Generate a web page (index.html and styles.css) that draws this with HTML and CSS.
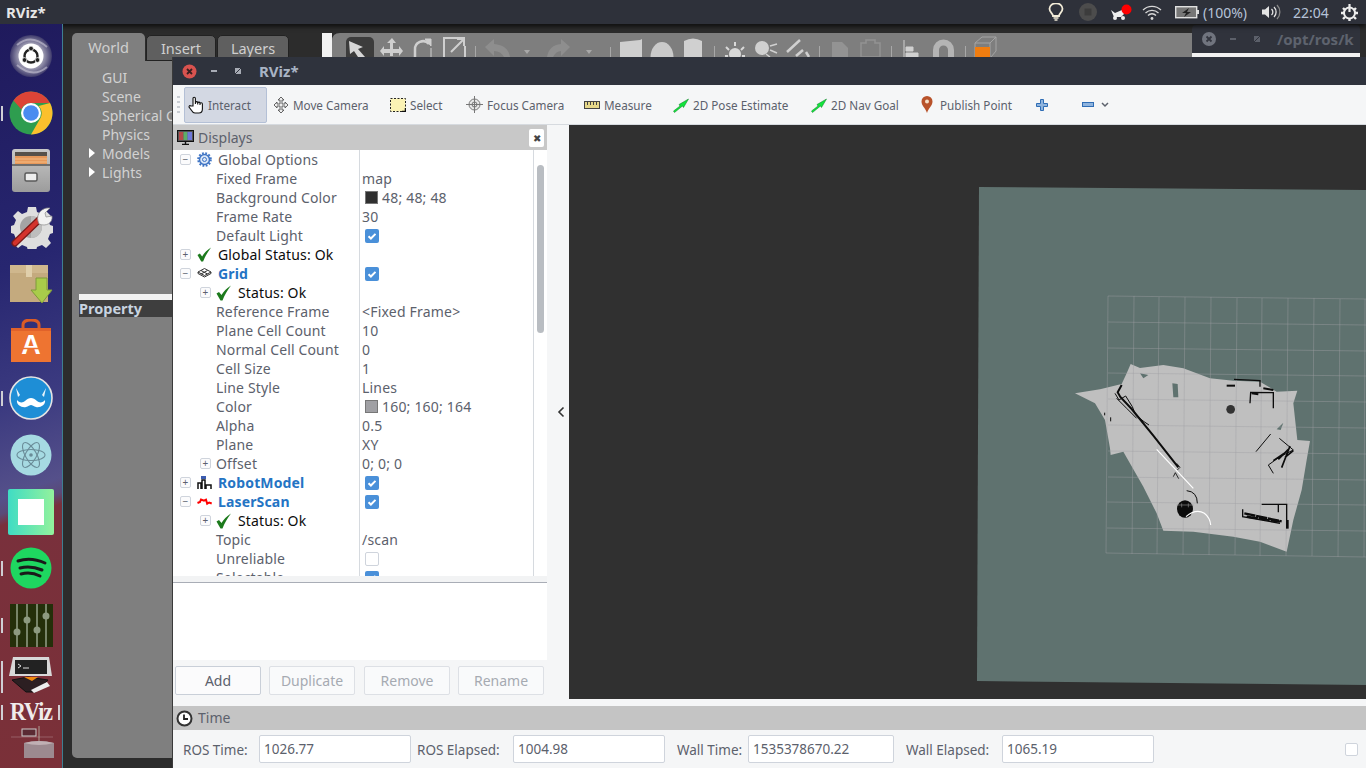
FILE: index.html
```html
<!DOCTYPE html>
<html lang="en">
<head>
<meta charset="utf-8">
<title>RViz*</title>
<link rel="stylesheet" href="styles.css">
</head>
<body>
<svg class="defs" width="0" height="0">
  <defs>
    <symbol id="tick" viewBox="0 0 14 14"><path d="M3.500 7.200l2.400 2.300 4.600-4.600" fill="none" stroke="#fff" stroke-width="2"/></symbol>
    <symbol id="ok" viewBox="0 0 16 16"><path d="M.5 8.500l2.500-1.500 2.500 3C7.500 6.500 10.500 3.500 15 .5 11.500 5 8.500 10 6.500 15.500L4.500 15.500z" fill="#1c7a1c"/></symbol>
    <symbol id="arrow" viewBox="0 0 16 16"><path d="M.5 14l6.500-5-1-1.500L15.500 2 10.500 10.500 9.500 9 1.500 15.500z" fill="#12e53c" stroke="#0a7a22" stroke-width=".5"/></symbol>
  </defs>
</svg>

<div class="gazebo">
  <div class="gz-left">
    <div class="gz-tabs">
      <span class="gz-tab active">World</span>
      <span class="gz-tab">Insert</span>
      <span class="gz-tab gz-layers">Layers</span>
    </div>
    <div class="gz-panel">
      <div class="gz-item">GUI</div>
      <div class="gz-item">Scene</div>
      <div class="gz-item">Spherical Coordinates</div>
      <div class="gz-item">Physics</div>
      <div class="gz-item tri">Models</div>
      <div class="gz-item tri">Lights</div>
      <div class="gz-white"></div>
      <div class="gz-prop">Property</div>
    </div>
  </div>
  <div class="gz-strip"></div>
  <svg class="gz-tools" width="860" height="24" viewBox="332 33 860 24">
    <path d="M332 57V41q0-8 8-8h852v24z" fill="#7e7e7e"/>
    <rect x="346" y="37" width="28" height="26" rx="5" fill="#3c3c3c"/>
    <path d="M349 41l14 6-5 2 7 8h-7l-4-6-4 3z" fill="#d6d6d6"/>
    <path d="M392 38l4 5h-3v6h6v-3l4 5-4 5v-3h-6v3h-3v-3h-6v3l-4-5 4-5v3h6v-6h-3z" fill="#cfcfcf"/>
    <path d="M415 57v-7a8 8 0 0 1 14-6" fill="none" stroke="#cfcfcf" stroke-width="2.500"/>
    <path d="M425 39h6v7z M431 48v9" fill="#cfcfcf" stroke="#cfcfcf"/>
    <path d="M444 57V38h21M465 57V46M451 52l12-12M457 39h7v7" fill="none" stroke="#cfcfcf" stroke-width="2"/>
    <path d="M475.500 46v11M610.500 47v10M714.500 46v11M819.500 46v11M891.500 46v11M965.500 46v11" stroke="#a8a8a8"/>
    <path d="M485 47l9-8v5q14 1 16 13h-6q-3-6-10-6v5z" fill="#8e8e8e"/>
    <path d="M570 47l-9-8v5q-12 1-14 13h6q3-6 8-6v5z" fill="#8e8e8e"/>
    <path d="M524 50h6l-3 4zM586 50h6l-3 4z" fill="#a8a8a8"/>
    <path d="M620 57V42l20-2 2-1v18z" fill="#cfcfcf"/>
    <ellipse cx="662" cy="57" rx="11.500" ry="15" fill="#cacaca"/>
    <path d="M684 57V41q9-5 18 0v16z" fill="#d0d0d0"/>
    <circle cx="735" cy="54" r="6" fill="#d8d8d8"/><path d="M735 42v4M726 47l3 3M744 47l-3 3M725 56h3M742 56h3" stroke="#d8d8d8" stroke-width="2"/>
    <circle cx="762" cy="48" r="7" fill="#d0d0d0"/><path d="M770 46l7-2M770 50l7 3M766 54l4 3" stroke="#d0d0d0" stroke-width="1.500"/>
    <path d="M787 52l13-12M796 56l7-6M806 52l3 5" stroke="#d0d0d0" stroke-width="2.500"/>
    <path d="M832 57V42h10l6 6v9z" fill="#939393"/>
    <path d="M861 57V43h5v-3h9v3h5v14z" fill="none" stroke="#939393" stroke-width="1.500"/>
    <path d="M904 40v17M906 47h7v4h-7zM906 53h12v4h-12z" fill="#d0d0d0" stroke="#d0d0d0"/>
    <path d="M933 57v-7a10.500 10.500 0 0 1 21 0v7h-6v-7a4.500 4.500 0 0 0-9 0v7z" fill="#b4b4b4"/>
    <path d="M975 57V43l7-6h14v14l-5 6M975 43h15v14M990 43l6-6" fill="none" stroke="#a4a4a4"/>
    <rect x="975" y="47" width="15" height="10" fill="#f07d10"/>
  </svg>
</div>

<div class="term">
  <div class="term-head">
    <svg class="ctl" width="14" height="14" viewBox="0 0 14 14"><circle cx="7" cy="7" r="7" fill="#70747e"/><path d="M4.500 4.500l5 5m0-5l-5 5" stroke="#33363f" stroke-width="1.800"/></svg>
    <span class="dash dim"></span>
    <span class="shrink dim"></span>
    <span class="term-title">/opt/ros/k</span>
  </div>
  <div class="term-body"></div>
</div>

<header class="topbar">
  <span class="app-title">RViz*</span>
  <div class="tray">
    <svg class="t-bulb" width="16" height="18" viewBox="0 0 16 18"><path d="M5 13c0-3-3.500-3.500-3.500-7.200a6.500 5.500 0 0 1 13 0C14.500 9.500 11 10 11 13z" fill="none" stroke="#f2ecd8" stroke-width="1.800"/><path d="M5.500 15h5M6.500 17h3" stroke="#f2ecd8" stroke-width="1.500"/></svg>
    <svg class="t-rec" width="18" height="18" viewBox="0 0 18 18"><circle cx="9" cy="9" r="9" fill="#4c4c4c"/><rect x="5.500" y="5.500" width="7" height="7" fill="#3c3c3c"/></svg>
    <svg class="t-robot" width="22" height="18" viewBox="0 0 22 18"><path d="M1 7l4 3 7-3 2 4-3 3H4z" fill="#eee"/><circle cx="5" cy="15" r="2" fill="#eee"/><circle cx="13" cy="15" r="2" fill="#eee"/><circle cx="16.500" cy="6.500" r="5" fill="#f00"/></svg>
    <svg class="t-wifi" width="20" height="16" viewBox="0 0 20 16"><path d="M1 6a13 13 0 0 1 18 0M3.500 9a9.500 9.500 0 0 1 13 0M6 11.500a5.500 5.500 0 0 1 8 0" fill="none" stroke="#d8d8d8" stroke-width="1.300"/><circle cx="10" cy="14.500" r="1.400" fill="#d8d8d8"/></svg>
    <svg class="t-batt" width="24" height="14" viewBox="0 0 24 14"><rect x=".7" y="1.700" width="21" height="11" fill="#777" stroke="#e0e0e0" stroke-width="1.400"/><rect x="22" y="5" width="2" height="4" fill="#ddd"/><path d="M14 3L7 8h4l-2 4 7-5h-4z" fill="#222"/></svg>
    <span class="t-pct">(100%)</span>
    <svg class="t-vol" width="20" height="16" viewBox="0 0 20 16"><path d="M1 5.500h3l4-3.500v12l-4-3.500H1z" fill="#e4e4e4"/><path d="M10.500 5a4 4 0 0 1 0 6M13 3a7 7 0 0 1 0 10" fill="none" stroke="#e4e4e4" stroke-width="1.300"/><path d="M16 1a10 10 0 0 1 0 14" fill="none" stroke="#888" stroke-width="1.300"/></svg>
    <span class="t-clock">22:04</span>
    <svg class="t-gear" width="17" height="17" viewBox="0 0 17 17"><circle cx="8.500" cy="9" r="5.500" fill="none" stroke="#ededed" stroke-width="2"/><path d="M8.500 0v8" stroke="#ededed" stroke-width="2.200"/><path d="M2 4l2 2M15 4l-2 2M0 9h3M14 9h3M2 15l2-2M15 15l-2-2M8.500 14.500V17" stroke="#ededed" stroke-width="2.400"/></svg>
  </div>
</header>

<nav class="launcher">
  <div class="slot">
    <svg width="44" height="46" viewBox="0 0 44 46"><defs><radialGradient id="swirl"><stop offset=".55" stop-color="#a7a5b8"/><stop offset="1" stop-color="#3e3a6c"/></radialGradient></defs><circle cx="22" cy="23" r="21" fill="url(#swirl)"/><path d="M8 12q14-12 30 2M38 34q-14 12-30-2" fill="none" stroke="#c9c7d6" stroke-width="2" opacity=".6"/><circle cx="22" cy="23" r="12.500" fill="#fff"/><circle cx="22" cy="23" r="6.500" fill="none" stroke="#222" stroke-width="2.400"/><circle cx="22" cy="15.500" r="2.400" fill="#222" stroke="#fff" stroke-width=".8"/><circle cx="15.500" cy="27" r="2.400" fill="#222" stroke="#fff" stroke-width=".8"/><circle cx="28.500" cy="27" r="2.400" fill="#222" stroke="#fff" stroke-width=".8"/></svg>
  </div>
  <div class="slot">
    <i class="pip"></i>
    <svg width="44" height="44" viewBox="0 0 44 44"><circle cx="22" cy="22" r="21.500" fill="#2e9d4f"/><path d="M22 .5A21.500 21.500 0 0 1 41 12H22a10 10 0 0 0-9.500 6.500L4.500 9.500A21.500 21.500 0 0 1 22 .5z" fill="#dc4437"/><path d="M41 12a21.500 21.500 0 0 1-19 31.500l9.500-16.500A10 10 0 0 0 29.500 15z" fill="#fbc02d"/><circle cx="22" cy="22" r="10" fill="#fff"/><circle cx="22" cy="22" r="7.800" fill="#4a8cf0"/></svg>
  </div>
  <div class="slot">
    <svg width="42" height="44" viewBox="0 0 42 44"><defs><linearGradient id="metal" x2="0" y2="1"><stop offset="0" stop-color="#c8c8c8"/><stop offset="1" stop-color="#9c9c9c"/></linearGradient></defs><path d="M2 4q0-3 3-3h32q3 0 3 3v37q0 3-3 3H5q-3 0-3-3z" fill="url(#metal)"/><rect x="5" y="4" width="32" height="5" fill="#57514a"/><path d="M5 8h32v8H5z" fill="#e6985a"/><path d="M5 11h32M5 14h32" stroke="#f5bc84"/><path d="M2 16h38v2H2z" fill="#6e6e6e"/><rect x="15" y="25" width="12" height="8" rx="1.500" fill="#eee" stroke="#5a5a5a" stroke-width="1.500"/></svg>
  </div>
  <div class="slot">
    <svg width="44" height="44" viewBox="0 0 44 44"><path d="M22 2l5 0 1 5 5 2 4-3 5 5-3 4 2 5 3 1v7l-3 1-2 5 3 4-5 5-4-3-5 2-1 4h-8l-1-4-5-2-4 3-5-5 3-4-2-5-3-1v-7l3-1 2-5-3-4 5-5 4 3 5-2 1-5z" fill="#dedede"/><circle cx="22" cy="22" r="11" fill="#a4a4a4"/><path d="M22 11a11 11 0 0 1 0 22z" fill="#bdbdbd"/><path d="M6 38L31 14" stroke="#7d1a18" stroke-width="7" stroke-linecap="round"/><path d="M6 38L31 14" stroke="#d4332c" stroke-width="4.500" stroke-linecap="round"/><path d="M29 16c-2-7 4-14 12-13l-5 5 1 4 6-1c1 7-6 11-13 8z" fill="#f2f2f2" stroke="#8a8a8a" stroke-width=".7"/></svg>
  </div>
  <div class="slot">
    <svg width="44" height="40" viewBox="0 0 44 40"><path d="M1 5q0-4 4-4h30q4 0 4 4v33H1z" fill="#c4aa7e"/><path d="M1 1h38v8H1z" fill="#cfb78d"/><rect x="17" y="1" width="6" height="12" fill="#e0cfab"/><path d="M22 26h5V14h11v12h5L33 39z" fill="#a9cc4a" stroke="#7f9a3a"/></svg>
  </div>
  <div class="slot">
    <svg width="42" height="44" viewBox="0 0 42 44"><path d="M13 12V6q0-5 8-5t8 5v6" fill="none" stroke="#db5c25" stroke-width="3"/><path d="M1 9h40v34H1z" fill="#ee7431"/><path d="M1 9h40v3H1z" fill="#e0622a"/><text class="bag-a" x="21" y="35" text-anchor="middle">A</text><path d="M9 29.500h24" stroke="#ee7431" stroke-width="1.500"/></svg>
  </div>
  <div class="slot">
    <i class="pip"></i>
    <svg width="44" height="44" viewBox="0 0 44 44"><circle cx="22" cy="22" r="21" fill="#1e8ed6" stroke="#e4e4e4" stroke-width="1.600"/><path d="M8 24c2 3 6 3 8 1 2-2 4-3 6-3s4 1 6 3c2 2 6 2 8-1 1 5-5 8-9 7-2-.5-4-2-5-2s-3 1.500-5 2c-4 1-10-2-9-7z" fill="#fff"/><path d="M7 12l2 9 2-2zM37 12l-2 9-2-2z" fill="#e8f4fb"/></svg>
  </div>
  <div class="slot">
    <svg width="42" height="42" viewBox="0 0 42 42"><circle cx="21" cy="21" r="20.500" fill="#a6dae2"/><g fill="none" stroke="#6a8c98" stroke-width="1.100"><ellipse cx="21" cy="21" rx="14" ry="5.500"/><ellipse cx="21" cy="21" rx="14" ry="5.500" transform="rotate(60 21 21)"/><ellipse cx="21" cy="21" rx="14" ry="5.500" transform="rotate(-60 21 21)"/></g><circle cx="21" cy="21" r="1.800" fill="#6a8c98"/></svg>
  </div>
  <div class="slot">
    <div class="sq"><div class="sq-in"></div></div>
  </div>
  <div class="slot">
    <i class="pip"></i>
    <svg width="42" height="42" viewBox="0 0 42 42"><circle cx="21" cy="21" r="20.500" fill="#1ed760"/><path d="M8 14c9-3 18-2 27 2M10 21c7-2 15-1 22 2M11 27c6-1.500 13-1 19 2" fill="none" stroke="#1a1a1a" stroke-width="3" stroke-linecap="round"/></svg>
  </div>
  <div class="slot">
    <i class="pip"></i>
    <svg width="43" height="43" viewBox="0 0 43 43"><rect width="43" height="43" fill="#242f0a"/><path d="M7 0v43M17 0v43M27 0v43M36 0v43" stroke="#8d9a80" stroke-width="1.600"/><circle cx="7" cy="28" r="3.500" fill="#8d9a80"/><circle cx="17" cy="16" r="3.500" fill="#8d9a80"/><circle cx="27" cy="26" r="3.500" fill="#8d9a80"/><circle cx="36" cy="12" r="3.500" fill="#8d9a80"/></svg>
  </div>
  <div class="slot slot-term">
    <i class="pip pip-tall"></i>
    <svg width="46" height="36" viewBox="0 0 46 36"><path d="M5 0h36l3 19H1z" fill="#d8d8d8"/><rect x="7" y="3" width="32" height="14" fill="#222"/><path d="M10 7l3 2-3 2M15 11h6" stroke="#ddd" fill="none"/><path d="M4 23l16-3 20 3-12 12H18z" fill="#2c1f22" stroke="#111"/><path d="M16 20h14l-6 4z" fill="#f08a10"/><path d="M23 33l16-8 3 4-16 7z" fill="#eee"/></svg>
  </div>
  <div class="slot slot-rviz">
    <i class="pip"></i><span class="rviz-logo">RViz</span><i class="pip pip-r"></i>
  </div>
  <div class="slot slot-last">
    <svg width="46" height="32" viewBox="0 0 46 32"><path d="M3 11h42" stroke="#a06a72" stroke-width=".8"/><path d="M31 0v24" stroke="#bba" stroke-width=".8"/><rect x="14" y="3" width="14" height="7" fill="#5a2a33" stroke="#ccc"/><path d="M16 17q15-4 30 0v15H16z" fill="#9c8a90"/><path d="M16 17q15-4 30 0q-15 4-30 0z" fill="#c0b0b4"/></svg>
  </div>
</nav>

<section class="rviz">
  <div class="rv-title">
    <svg class="ctl" width="15" height="15" viewBox="0 0 15 15"><circle cx="7.500" cy="7.500" r="7" fill="#d9534f"/><path d="M5 5l5 5m0-5l-5 5" stroke="#3a2020" stroke-width="1.800"/></svg>
    <span class="dash"></span>
    <span class="shrink"></span>
    <span class="rv-name">RViz*</span>
  </div>

  <div class="tools">
    <span class="grip"></span>
    <div class="tool w-int active">
      <svg width="18" height="18" viewBox="0 0 18 18"><path d="M5 10V2.500a1.200 1.200 0 0 1 2.400 0V8V6.500a1.200 1.200 0 0 1 2.300 0V8.500V7a1.200 1.200 0 0 1 2.300 0v2V8a1.200 1.200 0 0 1 2.400 0v5q0 4-3.500 4H7q-2 0-3-2l-3-4q0-2 2-1z" fill="#fff" stroke="#111" stroke-width="1.100"/></svg>
      <span>Interact</span>
    </div>
    <div class="tool w-move">
      <svg width="16" height="18" viewBox="0 0 16 18"><path d="M8 1l3 3H9v4h3V6l3 3-3 3v-2H9v4h2l-3 3-3-3h2v-4H4v2L1 9l3-3v2h3V4H5z" fill="#eee" stroke="#555" stroke-width=".9"/></svg>
      <span>Move Camera</span>
    </div>
    <div class="tool w-sel">
      <svg width="16" height="14" viewBox="0 0 16 14"><rect x=".5" y=".5" width="15" height="13" fill="#fbf3b5" stroke="#222" stroke-dasharray="2 1.500"/><path d="M12 13.500h3.500V10" fill="none" stroke="#111" stroke-width="1.500"/></svg>
      <span>Select</span>
    </div>
    <div class="tool w-foc">
      <svg width="17" height="17" viewBox="0 0 17 17"><circle cx="8.500" cy="8.500" r="5.500" fill="#e6e6e6" stroke="#777"/><circle cx="8.500" cy="8.500" r="2.500" fill="none" stroke="#777"/><path d="M8.500 0v17M0 8.500h17" stroke="#777"/></svg>
      <span>Focus Camera</span>
    </div>
    <div class="tool w-mea">
      <svg width="16" height="8" viewBox="0 0 16 8"><rect x=".5" y=".5" width="15" height="7" fill="#e6d88a" stroke="#444"/><path d="M3.500 1v3M6.500 1v3M9.500 1v3M12.500 1v3" stroke="#444"/></svg>
      <span>Measure</span>
    </div>
    <div class="tool w-pose">
      <svg width="16" height="16"><use href="#arrow"/></svg>
      <span>2D Pose Estimate</span>
    </div>
    <div class="tool w-nav">
      <svg width="16" height="16"><use href="#arrow"/></svg>
      <span>2D Nav Goal</span>
    </div>
    <div class="tool w-pub">
      <svg width="12" height="17" viewBox="0 0 12 17"><path d="M6 17C4.500 12 .5 10 .5 5.500a5.500 5.500 0 0 1 11 0C11.500 10 7.500 12 6 17z" fill="#b8522a"/><circle cx="6" cy="5.500" r="2" fill="#f5e0c8"/></svg>
      <span>Publish Point</span>
    </div>
    <div class="tool w-plus">
      <svg width="12" height="12" viewBox="0 0 12 12"><path d="M4.500.5h3v4h4v3h-4v4h-3v-4h-4v-3h4z" fill="#8fb4de" stroke="#2f6db5"/></svg>
    </div>
    <div class="tool w-minus">
      <svg width="12" height="5" viewBox="0 0 12 5"><rect x=".5" y=".5" width="11" height="4" fill="#8fb4de" stroke="#2f6db5"/></svg>
      <svg class="chev" width="8" height="6" viewBox="0 0 8 6"><path d="M1 1l3 3 3-3" fill="none" stroke="#5c616c" stroke-width="1.500"/></svg>
    </div>
  </div>

  <div class="main">
    <aside class="dock">
      <div class="dock-head">
        <svg width="17" height="15" viewBox="0 0 17 15"><rect x=".5" y=".5" width="16" height="11" fill="#555" stroke="#111"/><rect x="2" y="2" width="4.500" height="8" fill="#b54a4a"/><rect x="6.500" y="2" width="4" height="8" fill="#5cae68"/><rect x="10.500" y="2" width="4.500" height="8" fill="#6f78d8"/><path d="M8.500 12v2M5 14.500h7" stroke="#111" stroke-width="1.400"/></svg>
        <span class="dock-name">Displays</span>
        <span class="dock-x">✖</span>
      </div>
      <div class="tree-wrap">
        <div class="tree">
          <div class="row"><div class="name lv0"><span class="exp">−</span><svg class="ico" width="15" height="15" viewBox="0 0 15 15"><circle cx="7.500" cy="7.500" r="5" fill="#dbe7f7" stroke="#3f74c4" stroke-width="1.500"/><circle cx="7.500" cy="7.500" r="6.300" fill="none" stroke="#3f74c4" stroke-width="2" stroke-dasharray="1.800 1.500"/><circle cx="7.500" cy="7.500" r="2" fill="none" stroke="#3f74c4"/></svg><span>Global Options</span></div><div class="val"></div></div>
          <div class="row"><div class="name prop">Fixed Frame</div><div class="val">map</div></div>
          <div class="row"><div class="name prop">Background Color</div><div class="val swv"><i class="sw sw-bg"></i>48; 48; 48</div></div>
          <div class="row"><div class="name prop">Frame Rate</div><div class="val">30</div></div>
          <div class="row"><div class="name prop">Default Light</div><div class="val"><svg class="cb on"><use href="#tick"/></svg></div></div>
          <div class="row"><div class="name lv0"><span class="exp">+</span><svg class="ico" width="15" height="15"><use href="#ok"/></svg><span class="blk">Global Status: Ok</span></div><div class="val"></div></div>
          <div class="row"><div class="name lv0"><span class="exp">−</span><svg class="ico" width="15" height="15" viewBox="0 0 15 15"><path d="M1 6l6.500-3.500L14 6l-6.500 3.500zM4 4.500l6.500 3.500M10.500 4.500L4 8M1 6v1.500l6.500 3.500L14 7.500V6" fill="none" stroke="#333"/></svg><b class="hd">Grid</b></div><div class="val"><svg class="cb on"><use href="#tick"/></svg></div></div>
          <div class="row"><div class="name lv1"><span class="exp">+</span><svg class="ico2" width="16" height="16"><use href="#ok"/></svg><span class="blk">Status: Ok</span></div><div class="val"></div></div>
          <div class="row"><div class="name prop">Reference Frame</div><div class="val">&lt;Fixed Frame&gt;</div></div>
          <div class="row"><div class="name prop">Plane Cell Count</div><div class="val">10</div></div>
          <div class="row"><div class="name prop">Normal Cell Count</div><div class="val">0</div></div>
          <div class="row"><div class="name prop">Cell Size</div><div class="val">1</div></div>
          <div class="row"><div class="name prop">Line Style</div><div class="val">Lines</div></div>
          <div class="row"><div class="name prop">Color</div><div class="val swv"><i class="sw sw-grid"></i>160; 160; 164</div></div>
          <div class="row"><div class="name prop">Alpha</div><div class="val">0.5</div></div>
          <div class="row"><div class="name prop">Plane</div><div class="val">XY</div></div>
          <div class="row"><div class="name lv1 off"><span class="exp">+</span><span>Offset</span></div><div class="val">0; 0; 0</div></div>
          <div class="row"><div class="name lv0"><span class="exp">+</span><svg class="ico" width="15" height="15" viewBox="0 0 15 15"><rect x="4" y="1" width="5" height="3" fill="#3c5cb0"/><path d="M1 14V8h3v6M5 14V5h3v9M9 14v-4h5v4" fill="none" stroke="#111" stroke-width="1.500"/></svg><b class="hd">RobotModel</b></div><div class="val"><svg class="cb on"><use href="#tick"/></svg></div></div>
          <div class="row"><div class="name lv0"><span class="exp">−</span><svg class="ico" width="15" height="15" viewBox="0 0 15 15"><path d="M.5 9l2.500-1 1-2.500 3 1.200 2-1 1.200 4 2-1.200 2.500 1" fill="none" stroke="#f00" stroke-width="2"/></svg><b class="hd">LaserScan</b></div><div class="val"><svg class="cb on"><use href="#tick"/></svg></div></div>
          <div class="row"><div class="name lv1"><span class="exp">+</span><svg class="ico2" width="16" height="16"><use href="#ok"/></svg><span class="blk">Status: Ok</span></div><div class="val"></div></div>
          <div class="row"><div class="name prop">Topic</div><div class="val">/scan</div></div>
          <div class="row"><div class="name prop">Unreliable</div><div class="val"><svg class="cb"></svg></div></div>
          <div class="row"><div class="name prop">Selectable</div><div class="val"><svg class="cb on"><use href="#tick"/></svg></div></div>
        </div>
        <div class="scroll"><div class="thumb"></div></div>
      </div>
      <div class="split"></div>
      <div class="desc"></div>
      <div class="btns">
        <button class="btn prim">Add</button>
        <button class="btn">Duplicate</button>
        <button class="btn btn-third">Remove</button>
        <button class="btn">Rename</button>
      </div>
    </aside>
    <div class="collapse"><svg width="8" height="12" viewBox="0 0 8 12"><path d="M6.500 1.500L2 6l4.500 4.500" fill="none" stroke="#333" stroke-width="1.600"/></svg></div>
    <svg class="scene" width="797" height="574" viewBox="569 125 797 574">
      <rect x="569" y="125" width="797" height="574" fill="#303030"/>
      <polygon points="979,187 1366,190 1366,685 977,681" fill="#5f726f"/>
      <g transform="translate(1060 340) scale(.33333)">
        <polygon fill="#bfbfbf" points="45,160 120,148 185,132 200,100 212,72 240,84 310,75 370,85 450,115 520,122 600,125 650,155 712,152 700,190 712,300 750,303 740,360 725,450 700,540 680,635 600,605 520,590 400,575 310,572 290,520 250,440 190,335 152,345 150,325 135,240 105,190"/>
        <path d="M337 130l16 2 2 40-15 0zM240 100l25 5-15 10zM650 268l20-20-8 22z" fill="#5f726f"/>
      </g>
      <path fill="none" stroke="#a0a0a4" stroke-opacity=".42" stroke-width="1" d="M1108 296L1106 553M1134 296L1132 554M1159 297L1157 554M1185 297L1183 555M1211 297L1209 555M1237 298L1235 555M1262 298L1260 556M1288 298L1286 556M1314 298L1312 556M1340 299L1338 557M1365 299L1364 557M1108 296L1366 299M1108 322L1366 325M1108 348L1366 351M1108 373L1366 376M1108 399L1366 402M1108 425L1366 428M1108 451L1366 454M1108 477L1366 480M1107 502L1366 505M1107 528L1366 531M1106 553L1366 557"/>
      <g transform="translate(1060 340) scale(.33333)" fill="none" stroke="#0c0c0c">
        <path d="M185 135l-12 22 8 14 34 36 65 80 75 95" stroke-width="6"/>
        <path d="M165 160l12 20 20-12 20 32 10 25 25 20 15 10M170 175l30 30 30 30" stroke-width="3"/>
        <path d="M350 370l10 12-8 8M340 410l6-12 10 18" stroke-width="2.500"/>
        <path d="M500 137h25" stroke-width="6"/>
        <path d="M522 118l78 4v18M570 190l2-33 68 1v47" stroke-width="4"/>
        <path d="M610 145l30 5M575 160l20 3" stroke-width="6"/>
        <path d="M588 335l44-53" stroke-width="3"/>
        <path d="M658 295l42 35-40 20-35 25 15 25" stroke-width="3"/>
        <path d="M690 318l-25 65M672 340l-32 22M685 328l-30 30M700 332l-25 20" stroke-width="5"/>
        <path d="M380 452q32 3 32 38M134 218v8M152 232v12" stroke-width="3"/>
        <path d="M548 508v22l112 20" stroke-width="4"/>
        <path d="M553 520l112 24M560 530l100 15" stroke-width="7" stroke-dasharray="34 2"/>
        <path d="M605 493h75v66M655 495v22" stroke-width="4"/>
        <path d="M682 540v26" stroke-width="8"/>
        <ellipse cx="375" cy="507" rx="24" ry="26" fill="#0c0c0c" stroke="none"/>
        <path d="M350 495h50M365 490v12M385 490v12" stroke="#8a8a8a" stroke-width="2"/>
        <circle cx="512" cy="208" r="13" fill="#333" stroke="none"/>
        <path d="M290 328l110 117M378 530q30-25 55-10 17 13 19 35" stroke="#fff" stroke-width="3.500"/>
      </g>
    </svg>
  </div>

  <div class="time-gap"></div>
  <div class="time-head">
    <svg width="17" height="17" viewBox="0 0 17 17"><circle cx="8.500" cy="8.500" r="7" fill="#fff" stroke="#333" stroke-width="2"/><path d="M8 4.500V9h4" fill="none" stroke="#222" stroke-width="1.800"/></svg>
    <span class="time-name">Time</span>
  </div>
  <div class="time-row">
    <label class="lb lb1">ROS Time:</label><div class="inp">1026.77</div>
    <label class="lb lb2">ROS Elapsed:</label><div class="inp">1004.98</div>
    <label class="lb lb3">Wall Time:</label><div class="inp inp-w">1535378670.22</div>
    <label class="lb lb4">Wall Elapsed:</label><div class="inp">1065.19</div>
    <span class="time-cb"></span>
  </div>
</section>
</body>
</html>
```

FILE: styles.css
```css
* { box-sizing: border-box; }
html, body { margin: 0; height: 100%; }
body {
  width: 1366px;
  height: 768px;
  position: relative;
  overflow: hidden;
  background: #2c2c2c;
  font-family: "Noto Sans", sans-serif;
  font-size: 14px;
  color: #5c616c;
}
.defs { position: absolute; }

/* desktop windows */
.topbar {
  position: absolute; left: 0; top: 0; width: 1366px; height: 24px;
  background: #2e313a;
  display: flex; align-items: center; justify-content: space-between;
  padding-left: 6px;
  box-shadow: 0 3px 4px rgba(0,0,0,.6);
}
.app-title { font-weight: 700; font-size: 15px; color: #e6e6e6; }
.tray { display: flex; align-items: center; color: #b6c3d8; font-size: 14px; }
.t-bulb { margin-right: 15px; }
.t-rec { margin-right: 13px; }
.t-robot { margin-right: 10px; }
.t-wifi { margin-right: 13px; }
.t-batt { margin-right: 4px; }
.t-pct { width: 46px; margin-right: 12px; white-space: nowrap; }
.t-vol { margin-right: 12px; }
.t-clock { width: 36px; margin-right: 12px; white-space: nowrap; }
.t-gear { margin-right: 8px; }

.launcher {
  position: absolute; left: 0; top: 24px; width: 63px; height: 744px;
  display: flex; flex-direction: column;
  padding-top: 4px;
  background: linear-gradient(160deg, #1f1a5c 0, #272670 32%, #3b3a80 50%, #55508a 62%, #5a4a78 64%, #79303c 65.500%, #7a3038 100%);
  border-right: 1px solid #3f7f92;
}
.slot { position: relative; height: 56.900px; flex: none; display: flex; align-items: center; justify-content: center; }
.slot svg { flex: none; }
.slot-term { height: 42px; }
.slot-rviz { height: 32px; }
.slot-last { height: 30px; align-items: flex-end; }
.pip { position: absolute; left: 1px; top: 50%; width: 2px; height: 15px; margin-top: -7px; background: #cfcfd4; }
.pip-tall { height: 32px; margin-top: -14px; }
.pip-r { left: auto; right: 2px; }
.sq { width: 46px; height: 46px; border-radius: 2px; background: linear-gradient(90deg, #3fdcc4, #93f29c); display: flex; align-items: center; justify-content: center; }
.sq-in { width: 26px; height: 26px; background: #fff; }
.bag-a { font-family: "Liberation Sans", sans-serif; font-weight: 700; font-size: 27px; fill: #fff; }
.rviz-logo { font-family: "Liberation Serif", serif; font-weight: 700; font-size: 22px; letter-spacing: -1px; color: #f0ecec; transform: scaleY(1.100); }

.gazebo { position: absolute; left: 63px; top: 24px; width: 1303px; height: 744px; background: #2c2c2c; }
.gz-left { position: absolute; left: 9px; top: 9px; width: 110px; height: 725px; }
.gz-tabs { display: flex; height: 28px; width: 230px; }
.gz-tab {
  width: 70px; margin-top: 2px; margin-right: 1px; padding-top: 2px; text-align: center;
  background: #5f5f5f; color: #cfcfcf; font-size: 14.500px;
  border-radius: 5px 5px 0 0; border: 1px solid #222;
}
.gz-layers { width: 72px; }
.gz-tab.active { width: 73px; margin-top: 0; padding-top: 4px; background: #7f7f7f; border: 0; }
.gz-panel { width: 230px; height: 697px; background: #7f7f7f; border-radius: 0 0 0 5px; padding: 7px 0 0 30px; position: relative; }
.gz-item { width: 70px; height: 19px; line-height: 19px; color: #d2d2d2; white-space: nowrap; position: relative; font-size: 14px; }
.gz-item:not(.tri) { overflow: hidden; }
.tri::before { content: ""; position: absolute; left: -13px; top: 4px; border-left: 6px solid #fff; border-top: 5px solid transparent; border-bottom: 5px solid transparent; }
.gz-white { position: absolute; left: 7px; top: 233px; width: 223px; height: 6px; background: #f2f2f2; }
.gz-prop { position: absolute; left: 7px; top: 239px; width: 223px; height: 17px; line-height: 17px; background: #3e3e3e; color: #c8d4e0; font-weight: 700; font-size: 14.500px; }
.gz-strip { position: absolute; left: 259px; top: 9px; width: 10px; height: 24px; background: #f2f2f2; }
.gz-tools { position: absolute; left: 269px; top: 9px; display: block; }

.term { position: absolute; left: 1192px; top: 25px; width: 168px; height: 32px; display: flex; flex-direction: column; border-radius: 4px 4px 0 0; overflow: hidden; }
.term-head { height: 28px; background: #30333c; display: flex; align-items: center; padding-left: 10px; flex: none; }
.term-head .ctl { flex: none; }
.term-title { font-weight: 700; font-size: 15px; color: #5e636e; margin-left: 17px; white-space: nowrap; }
.term-body { flex: 1; background: #f2f2f2; }
.dash { width: 6px; height: 2px; background: #a8acb5; margin-left: 14px; flex: none; }
.dash.dim { background: #5c606a; margin-left: 14px; }
.shrink { width: 6px; height: 6px; margin-left: 18px; flex: none; background: linear-gradient(135deg, #a8acb5 42%, transparent 42%, transparent 58%, #a8acb5 58%); }
.shrink.dim { background: linear-gradient(135deg, #5c606a 42%, transparent 42%, transparent 58%, #5c606a 58%); margin-left: 18px; }

/* RViz window */
.rviz { position: absolute; left: 172px; top: 57px; width: 1194px; height: 711px; display: flex; flex-direction: column; background: #f5f6f7; border-left: 1px solid #3a3a3a; }
.rv-title { height: 28px; flex: none; background: #2f333d; display: flex; align-items: center; padding-left: 9px; }
.rv-name { font-weight: 700; font-size: 15px; color: #a9b4c4; margin-left: 18px; }

.tools { height: 40px; flex: none; display: flex; align-items: center; padding-left: 4px; border-bottom: 1px solid #d6dadf; white-space: nowrap; font-size: 11.700px; }
.grip { width: 3px; height: 18px; margin-right: 4px; background: repeating-linear-gradient(180deg, #c8ccd2 0 2px, transparent 2px 5px); flex: none; }
.tool { display: flex; align-items: center; gap: 4px; height: 36px; padding-left: 5px; flex: none; }
.tool span { padding-top: 1px; }
.tool.active { background: #d3d8e3; border: 1px solid #b4c0d6; border-radius: 2px; padding-left: 3px; gap: 2px; }
.w-int { width: 83px; }
.w-move { width: 117px; margin-left: 1px; }
.w-sel { width: 76px; }
.w-foc { width: 118px; }
.w-mea { width: 89px; }
.w-pose { width: 138px; }
.w-nav { width: 110px; }
.w-pub { width: 115px; gap: 7px; }
.w-plus { width: 46px; }
.w-minus { width: 60px; gap: 7px; }

.main { display: flex; height: 574px; flex: none; }
.dock { width: 374px; flex: none; display: flex; flex-direction: column; }
.dock-head { height: 25px; flex: none; background: #c8c8c8; display: flex; align-items: center; padding-left: 4px; gap: 4px; font-size: 14px; }
.dock-name { flex: 1; }
.dock-x { width: 15px; height: 18px; margin-right: 3px; background: #fff; border-radius: 2px; font-size: 10px; line-height: 18px; text-align: center; color: #444; }
.tree-wrap { height: 426px; flex: none; display: flex; background: #fff; }
.tree { width: 361px; overflow: hidden; border-right: 1px solid #d6dadf; }
.row { display: flex; height: 19px; align-items: stretch; line-height: 19px; white-space: nowrap; }
.name { width: 187px; flex: none; border-right: 1px solid #d6dadf; display: flex; align-items: center; overflow: hidden; letter-spacing: .15px; }
.lv0 { padding-left: 7px; }
.lv1 { padding-left: 27px; }
.prop { padding-left: 43px; }
.off .exp { margin-right: 5px; }
.exp { width: 11px; height: 11px; flex: none; border: 1px solid #cfd4dc; border-radius: 2px; font-size: 10px; line-height: 8px; text-align: center; color: #5c616c; background: #fbfbfc; }
.ico { flex: none; margin: 0 6px; }
.ico2 { flex: none; margin-left: 5px; margin-right: 6px; }
.blk { color: #0c0c0c; }
.hd { color: #2474c4; font-weight: 700; }
.val { flex: 1; padding-left: 2px; display: flex; align-items: center; letter-spacing: .2px; }
.swv { padding-left: 5px; gap: 4px; }
.sw { width: 13px; height: 13px; flex: none; border: 1px solid #777; }
.sw-bg { background: #303030; }
.sw-grid { background: #a0a0a4; }
.cb { width: 14px; height: 14px; margin-left: 3px; border: 1px solid #cfd4dc; border-radius: 2px; background: #fff; }
.cb.on { background: #4a90d9; border: 0; }
.scroll { flex: 1; padding: 15px 2px 0 2px; }
.thumb { width: 7px; height: 168px; border-radius: 4px; background: #b9bdc2; margin-left: 1px; }
.split { height: 7px; flex: none; background: #f2f3f4; border-bottom: 1px solid #a9adb6; }
.desc { height: 77px; flex: none; background: #fff; }
.btns { flex: 1; display: flex; padding: 6px 3px 3px 2px; gap: 8px; }
.btn { width: 86px; height: 29px; flex: none; padding: 0; background: #f9fafb; border: 1px solid #dde0e5; border-radius: 2px; font: 14px "Noto Sans", sans-serif; color: #a6aab2; }
.btn.prim { color: #5c616c; border-color: #c9cfd8; background: #fbfbfc; }
.btn-third { margin-left: 1px; }
.collapse { width: 22px; flex: none; display: flex; align-items: center; justify-content: center; padding-left: 6px; }
.scene { display: block; flex: none; }

.time-gap { height: 7px; flex: none; }
.time-head { height: 24px; flex: none; background: #c4c4c4; display: flex; align-items: center; padding-left: 3px; gap: 5px; font-size: 14px; }
.time-name { margin-top: -2px; }
.time-row { flex: 1; display: flex; align-items: center; padding-left: 10px; white-space: nowrap; position: relative; font-size: 13.500px; }
.lb { flex: none; padding: 1px 6px 0 0; }
.lb1 { width: 76px; }
.lb2 { width: 96px; margin-left: 6px; }
.lb3 { width: 71px; margin-left: 12px; }
.lb4 { width: 96px; margin-left: 12px; }
.inp { width: 152px; height: 28px; flex: none; background: #fff; border: 1px solid #cfd4dc; border-radius: 2px; padding-left: 4px; line-height: 27px; }
.inp-w { width: 146px; }
.time-cb { position: absolute; right: 8px; top: 13px; width: 13px; height: 13px; border: 1px solid #cfd4dc; border-radius: 2px; background: #fff; }
```
